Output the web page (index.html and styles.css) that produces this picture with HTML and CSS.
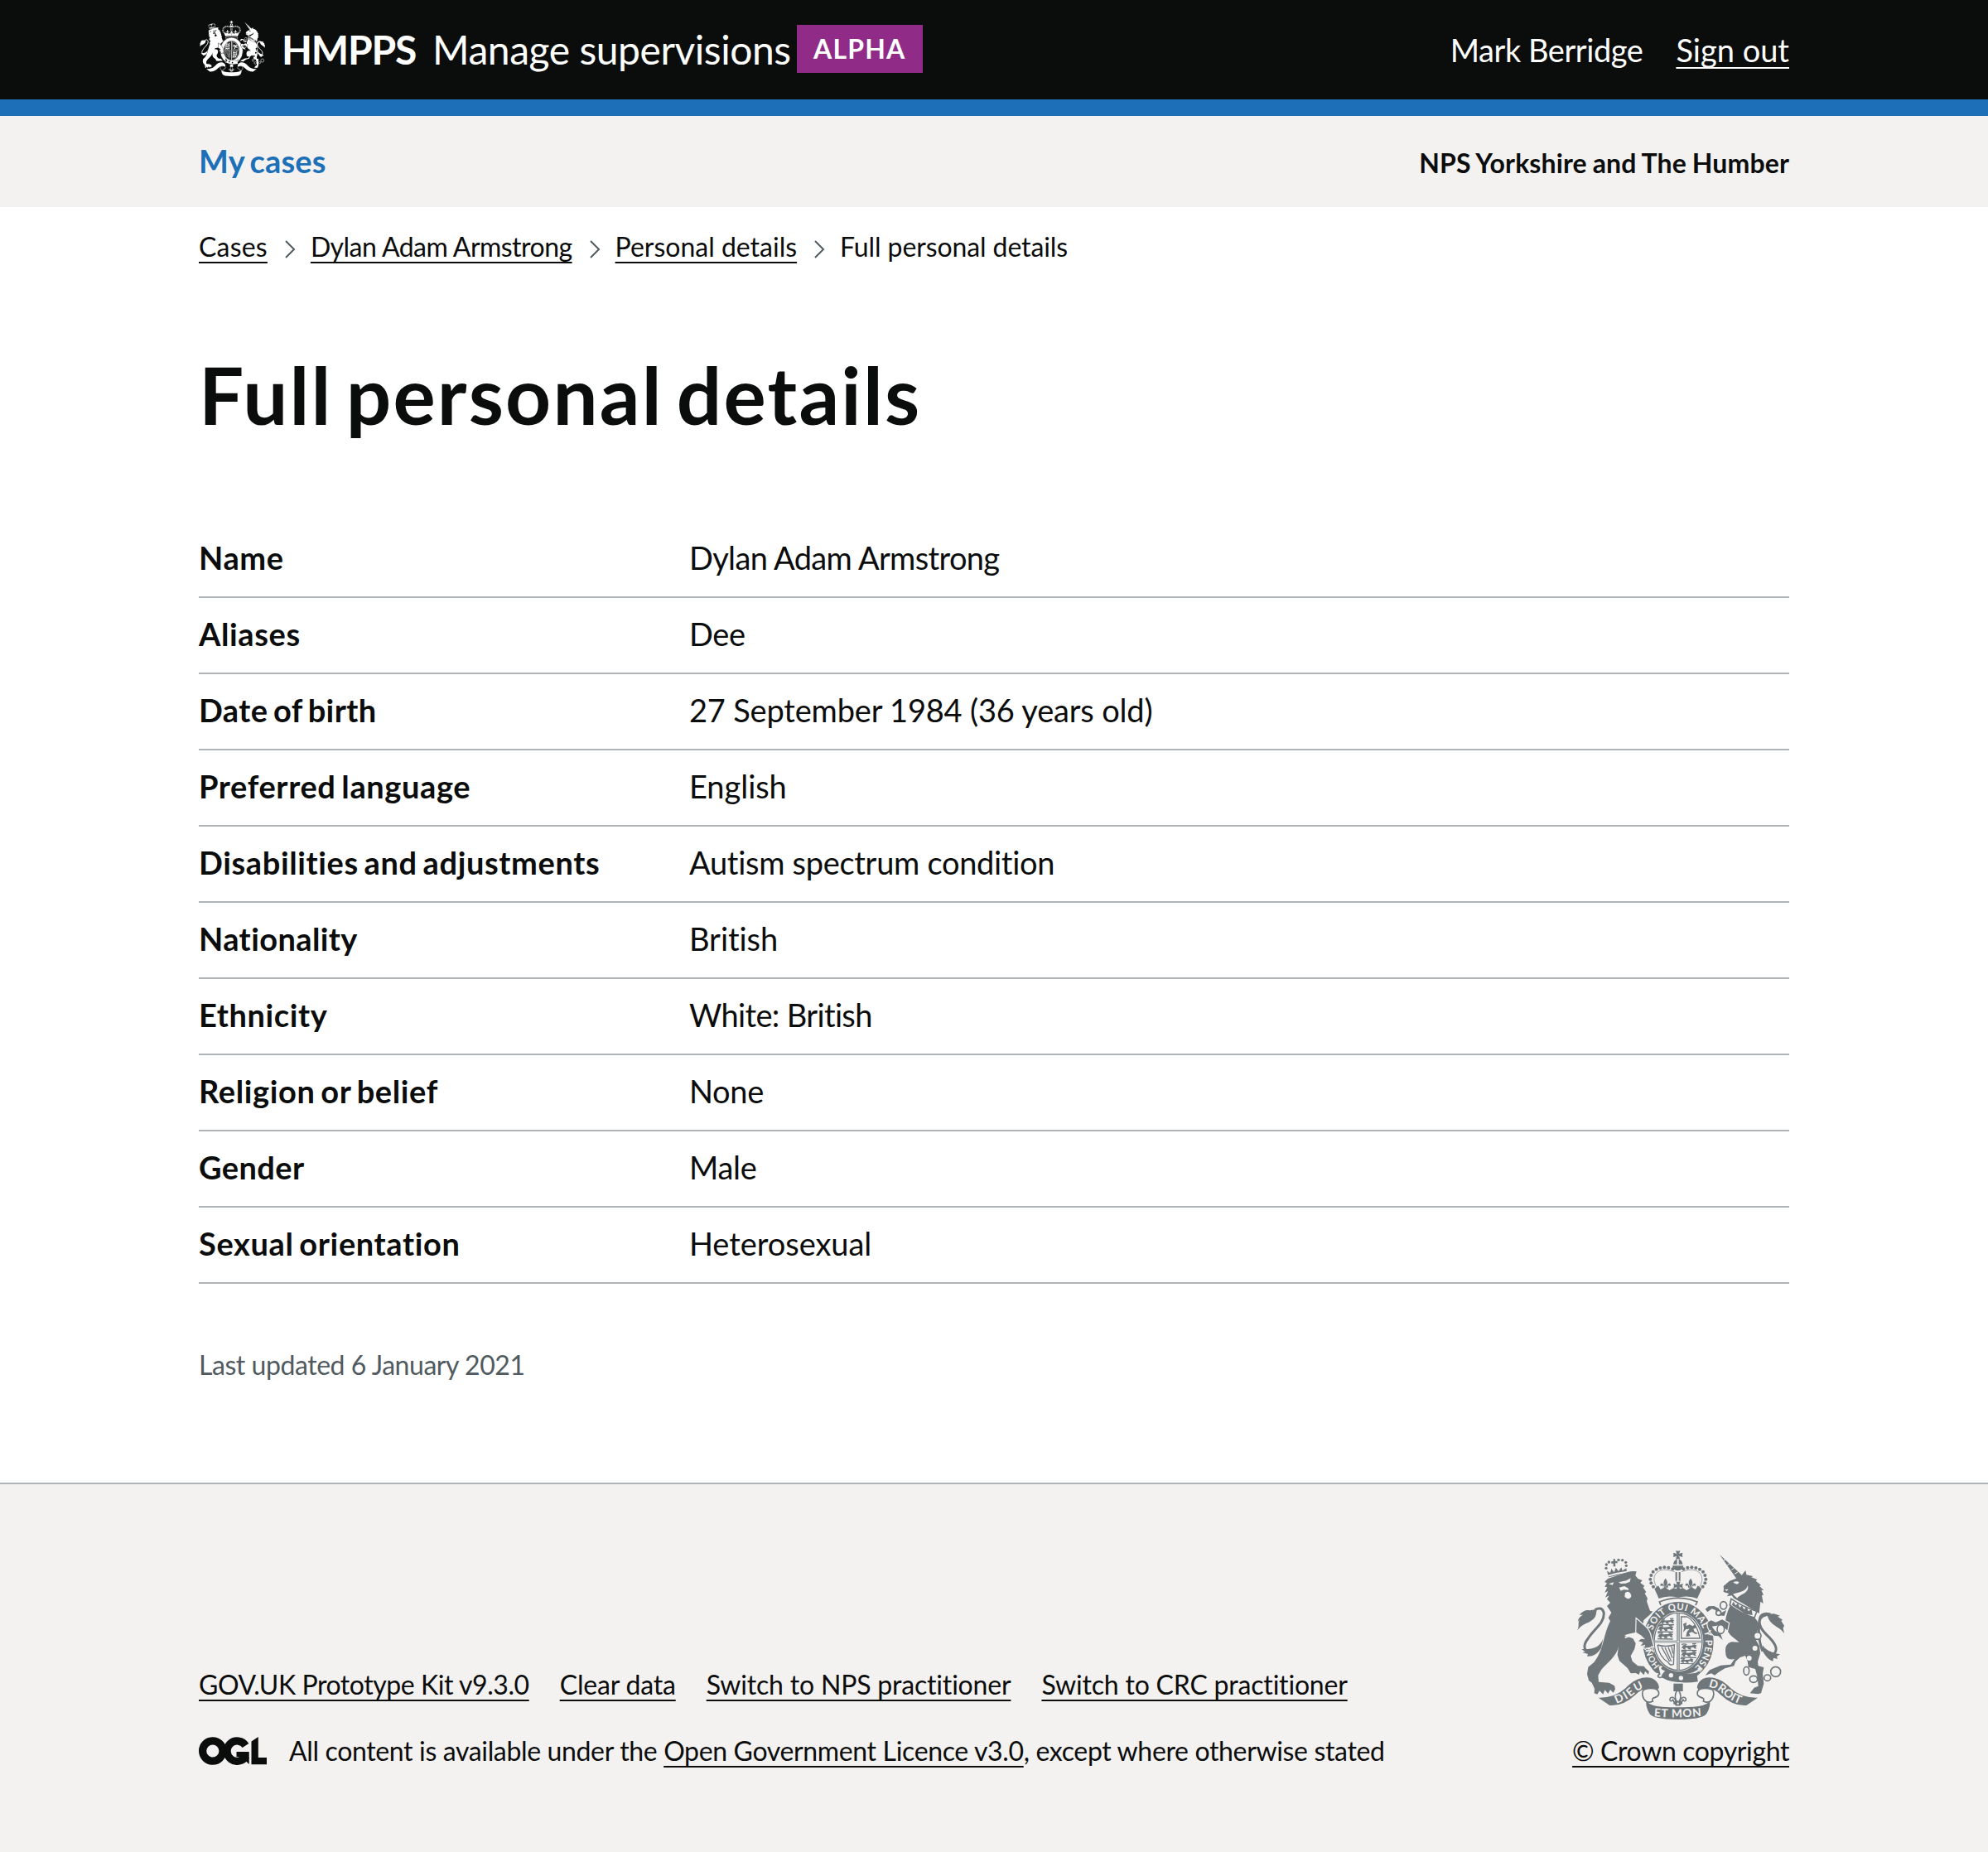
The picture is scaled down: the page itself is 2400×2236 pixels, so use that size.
FILE: index.html
```html
<!DOCTYPE html>
<html lang="en">
<head>
<meta charset="utf-8">
<title>Full personal details - Manage supervisions</title>
<link rel="stylesheet" href="styles.css">
</head>
<body>

<svg class="sprite" aria-hidden="true">
  <defs>
    <g id="patty"><path d="M-3 0L-8 -16Q0 -13 8 -16L3 0ZM-3 0L-8 16Q0 13 8 16L3 0ZM0 -3L-17 -8Q-14 0 -17 8L0 3ZM0 -3L17 -8Q14 0 17 8L0 3Z"/><circle r="4"/></g>
    <g id="fleur"><path d="M0 -18C9 -7 8 1 3 10H-3C-8 1 -9 -7 0 -18ZM-5 11C-7 -1 -18 -3 -19 6C-18 11 -13 9 -12 6C-9 9 -10 14 -5 18ZM5 11C7 -1 18 -3 19 6C18 11 13 9 12 6C9 9 10 14 5 18ZM-9 11H9V15H-9Z"/></g>
    <g id="passant"><path d="M-30 5L-24 -6L-16 -9L-10 -5L8 -6L17 -10L27 -6L22 0L26 6L18 5L14 1L4 2L6 9L-4 8L-8 2L-16 3L-14 9L-22 8L-24 3Z"/><path class="thin" d="M-29 -9Q-20 -14 -10 -9M10 -12L24 -13M-30 11L26 12"/></g>
    <g id="crown-arch">
      <circle cx="418" cy="133" r="6"/><circle cx="403" cy="128" r="6"/><circle cx="388" cy="127" r="6"/><circle cx="373" cy="129" r="6"/><circle cx="359" cy="134" r="6"/><circle cx="347" cy="143" r="6"/><circle cx="340" cy="156" r="6"/><circle cx="337" cy="170" r="6"/><circle cx="340" cy="184" r="6"/><circle cx="348" cy="197" r="6"/>
      <path class="thin arch" d="M425 143Q380 125 358 148Q340 170 364 205"/>
      <use href="#fleur" x="392" y="185"/>
      <path d="M352 205L366 193L374 207L390 199L406 210L421 202L438 207V236Q398 227 368 240Z"/>
    </g>
    <symbol id="arms" viewBox="72 66 750 612" preserveAspectRatio="none">
      <!-- imperial crown -->
      <use href="#patty" x="437" y="82"/>
      <path d="M420 116Q422 99 434 99V116ZM454 116Q452 99 440 99V116ZM417 121H457Q456 138 437 139Q418 138 417 121Z"/>
      <path d="M428 144H434V176H428ZM440 144H446V176H440Z"/>
      <use href="#crown-arch"/>
      <use href="#crown-arch" transform="translate(875 0) scale(-1 1)"/>
      <use href="#patty" x="438" y="194"/>
      <path class="line" d="M370 252Q437 224 507 252L500 266Q437 244 376 266Z"/>

      <!-- lion -->
      <g>
        <path d="M186 163L180 140L192 147L196 132L206 145L212 128L222 141L232 127L236 139L250 130L253 148Z"/>
        <circle cx="177" cy="130" r="5"/><circle cx="178" cy="117" r="5"/><circle cx="187" cy="108" r="5"/><circle cx="222" cy="100" r="5"/><circle cx="236" cy="101" r="5"/><circle cx="248" cy="109" r="5"/><circle cx="250" cy="121" r="5"/>
        <path d="M196 105H203V97H210V104H218V112H210L211 124H203V113H196Z"/>
        <path class="cutline" d="M184 158Q215 148 254 143"/>
        <path d="M183 168L255 144Q270 140 287 142L283 157L292 168L308 174L301 183L316 194L311 200L322 216L317 222L327 239L324 250L330 268L336 284L347 287L333 301L313 318L311 333C325 343 336 358 339 380L305 375L286 362L258 368L243 373L274 385L284 402L280 422L266 448L272 467L292 484L317 485L333 500L330 515L318 503L314 517L300 503L296 516L284 510L266 511L254 491L225 466L218 444L222 412C217 449 179 474 160 497L148 518L150 542L188 545L207 556L210 568L203 581L192 570L184 584L172 571L166 587L153 574L145 587L134 583L135 566L125 545L114 536L108 514L112 488L133 471C169 427 166 371 192 322L185 310L196 291L180 267L192 255L180 242L188 229L174 236L184 213L172 219L181 199L172 197L180 184L171 180Z"/>
        <path class="cut" d="M186 187L205 181L200 191ZM222 181L250 175L266 166L263 179L248 185L230 186ZM224 200L243 195L256 202L259 209L240 208L230 212ZM246 219C258 210 267 219 268 231C264 246 248 241 244 232Z"/>
        <path class="cutline" d="M245 381L283 368"/>
        <path class="tail" d="M133 432C89 437 94 407 112 384C132 350 169 332 169 294C165 271 148 274 137 280"/>
        <path d="M72 356C82 337 73 329 81 317L74 323Q77 307 93 299L80 299Q99 277 119 283L143 278C141 310 133 314 114 326C96 333 84 339 72 356Z"/>
        <path d="M166 386C150 419 133 423 88 423L101 433L91 435L111 441L108 449Q139 452 159 419Z"/>
      </g>

      <!-- unicorn -->
      <g>
        <path d="M588 81L664 151L671 160L649 168Z"/>
        <path class="cutline hair" d="M603 101L610 98M616 119L625 113M631 136L641 129M642 151L655 143"/>
        <path d="M646 168L668 155L682 138L685 154L709 159L703 163L724 171L719 176L738 191L732 194L748 210L739 209L747 227L741 228L746 258L736 251L731 294L679 262L640 239L632 229L614 232L622 222L609 218L602 216L603 203L602 195L624 176Z"/>
        <path class="cut" d="M637 182Q650 174 659 182L651 188ZM606 208L620 206L614 213ZM636 224C659 217 684 215 690 193C697 222 660 224 652 239Z"/>
        <path class="line" d="M630 241Q673 270 723 286L714 310Q663 294 625 264Z"/>
        <path d="M632 263L638 251L646 265L655 257L660 273L669 265L676 280L686 270L692 286L704 279L707 300L682 296Z"/>
        <path d="M626 266Q665 294 714 309C732 323 730 344 723 362L718 388L732 412L735 439L726 469L728 484L748 489L744 512L748 548L738 583L727 586L698 583L713 563L728 557L725 525L717 495L692 488Q691 466 681 447L662 453L646 468L640 484L607 493L584 507L570 518L558 511L536 518L552 499L592 482L628 479L642 459Q625 463 616 456Q609 446 610 438Q607 421 612 412Q619 400 631 397L659 398L629 374L607 346Q607 304 626 266Z"/>
        <path class="tail" d="M744 431C726 391 725 308 742 299C753 293 759 294 772 297C715 300 728 342 757 370C787 398 803 423 785 440"/>
        <path d="M760 296L785 295L807 302L798 305L816 317L811 321L822 338L818 347L822 367C807 339 767 340 760 296Z"/>
        <path d="M743 409Q759 435 807 442L795 450L798 459L783 455L781 467Q762 462 744 431Z"/>
      </g>

      <!-- garter and shield -->
      <ellipse class="garter" cx="438" cy="397" rx="131" ry="148"/>
      <ellipse class="cut" cx="438" cy="396" rx="91" ry="108"/>
      <ellipse class="thin" cx="438" cy="396" rx="87" ry="104"/>
      <path d="M433 292H443V392H525V400H443V500H433V400H351V392H433Z"/>
      <path class="cutline hair" d="M438 293V499M352 396H524"/>
      <g transform="translate(399 324) scale(.92)"><use href="#passant"/></g>
      <use href="#passant" x="394" y="349"/><use href="#passant" x="393" y="375"/>
      <use href="#passant" x="479" y="416"/><use href="#passant" x="478" y="442"/>
      <g transform="translate(471 466) scale(.85)"><use href="#passant"/></g>
      <path class="thin" d="M449 306H470Q503 323 517 384H449Z"/>
      <path d="M456 332L468 326L467 340L479 334L491 340L498 334L505 345L493 350L497 360L510 366L501 369L488 361L477 365L482 376L466 378L470 360L479 350L466 351L456 362L459 347Z"/>
      <path class="thin" d="M363 408Q391 417 424 408L421 478Q407 484 402 471Q370 452 363 408M378 416L407 468M390 417L413 468M402 416L417 455M414 414L419 439"/>
      <path class="cutline" d="M314 480Q340 524 438 520Q499 517 520 492"/>
      <path class="belt" d="M378 502Q428 538 507 525"/>
      <path class="line" d="M367 497C359 478 384 477 384 489C372 491 382 500 394 498C389 514 381 509 379 525C364 529 360 519 371 514Z"/>
      <circle class="cut" cx="412" cy="518" r="8"/><circle class="cut" cx="448" cy="528" r="8"/>

      <!-- forelegs resting on the garter, and the unicorn's chain -->
      <path class="over" d="M287 314L318 341Q336 358 339 380L348 413L339 411L345 428L330 417L327 428L316 420L318 407L302 412L311 399L294 394L304 386L318 388L305 374L286 362Z"/>
      <path class="over" d="M612 282L605 303L584 301L573 282L560 277L544 289L536 278L548 268L568 267L584 275L595 291ZM621 329L597 316L574 326L557 319L543 327L546 343L554 360L567 374L584 376L599 390L592 369L571 356L560 341L579 338L590 334L616 355Z"/>
      <g class="line"><ellipse cx="602" cy="265" rx="12" ry="14"/><circle cx="584" cy="292" r="9"/><ellipse cx="592" cy="351" rx="13" ry="16"/><circle cx="725" cy="375" r="13"/><ellipse cx="685" cy="502" rx="10" ry="15"/><ellipse cx="711" cy="532" rx="14" ry="12"/><ellipse cx="761" cy="527" rx="12" ry="11"/><circle cx="791" cy="505" r="18"/></g>
      <circle class="cut" cx="716" cy="420" r="9"/><circle class="cut" cx="695" cy="456" r="9"/>

      <!-- motto ribbon and pendant -->
      <path d="M421 548H455V576H421Z"/>
      <g transform="translate(437 597) scale(1.55)"><use class="line slim" href="#fleur"/></g>
      <circle class="line" cx="437" cy="620" r="6"/>
      <path d="M149 599Q207 601 247 565Q288 520 338 527Q365 535 369 562L360 577Q350 565 326 566Q302 568 284 588Q238 631 190 627Z"/>
      <path d="M726 599Q668 601 628 565Q587 520 537 527Q510 535 506 562L515 577Q525 565 549 566Q573 568 591 588Q637 631 685 627Z"/>
      <path class="line" d="M313 570C345 561 372 565 367 588C363 602 338 595 346 612Q333 618 323 613C307 601 305 581 313 570ZM562 570C530 561 503 565 508 588C512 602 537 595 529 612Q542 618 552 613C568 601 570 581 562 570Z"/>
      <path d="M322 611Q340 630 380 632Q437 636 494 632Q535 630 553 611Q555 632 542 655Q532 678 437 678Q342 678 333 655Q320 632 322 611Z"/>
    </symbol>
    <path id="garter-top" d="M339 397A99 116 0 0 1 537 397A99 116 0 0 1 488 497"/>
    <path id="garter-low" d="M372 483A99 116 0 0 1 339 407"/>
    <path id="ribbon-left" d="M214 621Q256 606 279 584Q301 563 330 563"/>
    <path id="ribbon-right" d="M547 561Q580 565 601 587Q628 611 665 623"/>
    <path id="ribbon-mid" d="M350 667Q437 674 526 665"/>
  </defs>
</svg>

<header class="header">
  <div class="container header-row">
    <a class="brand" href="#">
      <svg class="brand-crest"><use href="#arms"/></svg>
      <strong class="brand-org">HMPPS</strong>
      <span class="brand-service">Manage supervisions</span>
    </a>
    <strong class="tag">ALPHA</strong>
    <nav class="account">
      <span class="account-name">Mark Berridge</span>
      <a class="link" href="#">Sign out</a>
    </nav>
  </div>
</header>

<div class="subnav">
  <div class="container subnav-row">
    <a class="subnav-link" href="#">My cases</a>
    <strong class="subnav-team">NPS Yorkshire and The Humber</strong>
  </div>
</div>

<main class="container">
  <ol class="crumbs">
    <li class="crumb-short"><a class="link" href="#">Cases</a></li>
    <li class="crumb-name"><svg class="chevron" viewBox="0 0 13 22"><path d="M1 1L11 11L1 21"/></svg><a class="link" href="#">Dylan Adam Armstrong</a></li>
    <li><svg class="chevron" viewBox="0 0 13 22"><path d="M1 1L11 11L1 21"/></svg><a class="link" href="#">Personal details</a></li>
    <li class="crumb-current"><svg class="chevron" viewBox="0 0 13 22"><path d="M1 1L11 11L1 21"/></svg><span>Full personal details</span></li>
  </ol>

  <h1 class="title">Full personal details</h1>

  <dl class="summary">
    <div class="row"><dt>Name</dt><dd class="tight">Dylan Adam Armstrong</dd></div>
    <div class="row"><dt>Aliases</dt><dd>Dee</dd></div>
    <div class="row"><dt class="snug">Date of birth</dt><dd class="dob">27 September 1984 (36 years old)</dd></div>
    <div class="row"><dt>Preferred language</dt><dd class="plain">English</dd></div>
    <div class="row"><dt>Disabilities and adjustments</dt><dd>Autism spectrum condition</dd></div>
    <div class="row"><dt class="snug">Nationality</dt><dd class="plain">British</dd></div>
    <div class="row"><dt>Ethnicity</dt><dd class="tight">White: British</dd></div>
    <div class="row"><dt>Religion or belief</dt><dd>None</dd></div>
    <div class="row"><dt class="snug">Gender</dt><dd>Male</dd></div>
    <div class="row"><dt>Sexual orientation</dt><dd class="plain">Heterosexual</dd></div>
  </dl>

  <p class="updated">Last updated 6 January 2021</p>
</main>

<footer class="footer">
  <div class="container footer-row">
    <div class="footer-meta">
      <ul class="footer-links">
        <li class="kit"><a class="link" href="#">GOV.UK Prototype Kit v9.3.0</a></li>
        <li><a class="link" href="#">Clear data</a></li>
        <li><a class="link" href="#">Switch to NPS practitioner</a></li>
        <li><a class="link" href="#">Switch to CRC practitioner</a></li>
      </ul>
      <div class="licence">
        <svg class="ogl" viewBox="0 0 82 34" role="img" aria-label="Open Government Licence">
          <circle cx="16.8" cy="17" r="12.2"/>
          <path d="M56.5 10.5A12.2 12.2 0 1 0 57 23"/>
          <path class="solid" d="M45.5 18H60.7V33L56 28.6L51 24H45.5ZM63.5 5.5L71.8 0V25H82V33.3H63.5Z"/>
        </svg>
        <p>All content is available under the <a class="link" href="#">Open Government Licence v3.0</a>, except where otherwise stated</p>
      </div>
    </div>
    <div class="copyright">
      <svg class="footer-crest" viewBox="72 66 750 612">
        <use href="#arms" x="72" y="66" width="750" height="612"/>
        <g class="motto">
          <text><textPath href="#garter-top" startOffset="42" textLength="400">SOIT QUI MAL Y PENSE</textPath></text>
          <text class="motto-small"><textPath href="#garter-low" textLength="78">HONI</textPath></text>
          <text class="motto-large"><textPath href="#ribbon-left" textLength="115">DIEU</textPath></text>
          <text class="motto-large"><textPath href="#ribbon-mid" textLength="172">ET MON</textPath></text>
          <text class="motto-large"><textPath href="#ribbon-right" textLength="130">DROIT</textPath></text>
        </g>
      </svg>
      <a class="link" href="#">© Crown copyright</a>
    </div>
  </div>
</footer>

</body>
</html>
```
FILE: styles.css
```css
* { box-sizing: border-box; }

body {
  margin: 0;
  background: #fff;
  color: #0b0c0c;
  font: 32px/40px "Lato", "Liberation Sans", sans-serif;
  font-variant-ligatures: none;
}

ol, ul, dl, dd, p { margin: 0; padding: 0; list-style: none; }

.sprite { position: absolute; width: 0; height: 0; }

.container { width: 1920px; margin: 0 auto; }

.link {
  color: inherit;
  text-decoration: underline 2px;
  text-underline-offset: 6px;
  text-decoration-skip-ink: none;
}

/* Header */
.header {
  height: 140px;
  background: #0b0c0c;
  border-bottom: 20px solid #1d70b8;
  color: #fff;
  font-size: 38px;
  --ground: #0b0c0c;
}
.header-row { display: flex; align-items: center; height: 119px; }
.brand { display: flex; align-items: center; color: inherit; text-decoration: none; font-size: 48px; }
.brand-crest { width: 79px; height: 67px; margin: -3px 20px 0 1px; fill: currentColor; }
.brand-org { width: 182px; letter-spacing: -1.2px; }
.brand-service { width: 440px; letter-spacing: -.45px; white-space: nowrap; }
.tag {
  height: 58px;
  width: 152px;
  margin-top: -2px;
  padding-left: 20px;
  background: #912b88;
  font-size: 32px;
  line-height: 57px;
  letter-spacing: 1.2px;
}
.account { display: flex; gap: 40px; margin-left: auto; }
.account-name { letter-spacing: -.45px; }

/* Section navigation */
.subnav { height: 110px; background: #f3f2f1; }
.subnav-row { display: flex; justify-content: space-between; align-items: baseline; padding-top: 34px; }
.subnav-link { color: #1d70b8; font-size: 38px; font-weight: 700; text-decoration: none; letter-spacing: .2px; word-spacing: -3px; }
.subnav-team { letter-spacing: .13px; word-spacing: -1px; }

/* Breadcrumbs */
.crumbs { display: flex; padding-top: 28px; }
.crumbs li { display: flex; align-items: center; }
.crumb-short { letter-spacing: .2px; }
.crumb-name { letter-spacing: -.53px; }
.crumb-current { letter-spacing: -.1px; }
.chevron { width: 13px; height: 22px; margin: 5px 18px 0 21px; fill: none; stroke: #505a5f; stroke-width: 2; }

.title {
  margin: 108px 0 104px;
  font-size: 96px;
  line-height: 100px;
  letter-spacing: 2.2px;
  word-spacing: -9.5px;
}

/* Summary list */
.summary { font-size: 38px; line-height: 47px; }
.row {
  display: grid;
  grid-template-columns: 592px 1fr;
  height: 92px;
  padding-top: 20px;
  border-bottom: 2px solid #b1b4b6;
}
dt { font-weight: 700; letter-spacing: .62px; word-spacing: -3px; }
dd { letter-spacing: -.3px; }
.snug { letter-spacing: .4px; }
.tight { letter-spacing: -.65px; }
.dob { letter-spacing: -.18px; }
.plain { letter-spacing: -.05px; }

.updated { padding-top: 78px; color: #505a5f; letter-spacing: -.45px; }

/* Footer */
.footer { height: 446px; margin-top: 122px; padding-top: 80px; background: #f3f2f1; border-top: 2px solid #b1b4b6; --ground: #f3f2f1; }
.footer-row { display: flex; justify-content: space-between; align-items: flex-end; }
.footer-links { display: flex; gap: 37px; margin-bottom: 40px; letter-spacing: -.19px; }
.kit { letter-spacing: -.44px; }
.licence { display: flex; align-items: center; }
.licence p { letter-spacing: -.35px; }
.ogl { width: 82px; height: 34px; margin-right: 27px; fill: none; stroke: #0b0c0c; stroke-width: 9.2; }
.ogl .solid { fill: #0b0c0c; stroke: none; }
.copyright { display: flex; flex-direction: column; align-items: center; letter-spacing: -.38px; }
.footer-crest { width: 250px; height: 204px; margin-bottom: 18px; overflow: visible; color: #6f777b; fill: currentColor; }

/* Coat of arms */
.cut { fill: var(--ground); }
.cutline { fill: none; stroke: var(--ground); stroke-width: 6; }
.hair { stroke-width: 3; }
.line { fill: var(--ground); stroke: currentColor; stroke-width: 5; }
.slim { stroke-width: 3; }
.thin { fill: none; stroke: currentColor; stroke-width: 4; }
.arch { stroke-width: 2; }
.over { stroke: var(--ground); stroke-width: 7; paint-order: stroke; }
.tail { fill: none; stroke: currentColor; stroke-width: 9; }
.garter { stroke: var(--ground); stroke-width: 6; }
.belt { fill: none; stroke: currentColor; stroke-width: 32; }
.motto { fill: var(--ground); font-size: 34px; font-weight: 700; letter-spacing: 0; }
.motto-small { font-size: 30px; }
.motto-large { font-size: 41px; }
```
